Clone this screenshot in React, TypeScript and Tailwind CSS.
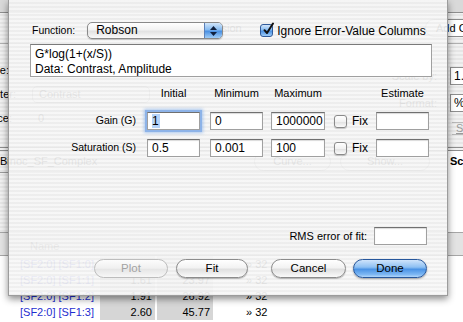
import React from "react";

type Row = { name: string; a: string; b: string };

const rows: Row[] = [
  { name: "[SF2:0] [SF1:0]", a: "1.22", b: "18.05" },
  { name: "[SF2:0] [SF1:1]", a: "1.61", b: "23.97" },
  { name: "[SF2:0] [SF1:2]", a: "1.91", b: "26.92" },
  { name: "[SF2:0] [SF1:3]", a: "2.60", b: "45.77" },
];

const TextBox = ({
  value = "",
  className = "",
  focused = false,
}: {
  value?: string;
  className?: string;
  focused?: boolean;
}) => (
  <div
    className={`h-[18px] shrink-0 flex items-center pl-[4px] bg-white border border-[#a0a0a0] border-t-[#707070] text-[12px] text-black whitespace-nowrap overflow-hidden ${
      focused
        ? "shadow-[0_0_0_2px_#8db3e8,0_0_3px_3px_rgba(110,160,230,0.55)]"
        : "shadow-[inset_0_1px_1px_rgba(0,0,0,0.15)]"
    } ${className}`}
  >
    {focused ? (
      <span className="bg-[#b5d3f8] leading-[14px] pr-[1px]">{value}</span>
    ) : (
      value
    )}
  </div>
);

const Check = ({ on = false, className = "" }: { on?: boolean; className?: string }) =>
  on ? (
    <span
      className={`relative block shrink-0 w-[13px] h-[13px] rounded-[3px] border border-[#2f5a9a] bg-[linear-gradient(180deg,#d3e6fb_0%,#86bbf1_45%,#4a90e2_55%,#9fcdf8_100%)] ${className}`}
    >
      <svg
        className="absolute left-[1px] top-[-3px]"
        width="13"
        height="14"
        viewBox="0 0 13 14"
      >
        <path
          d="M2.5 8.2 L5 11 L11 1.5"
          fill="none"
          stroke="#111"
          strokeWidth="2"
          strokeLinecap="round"
          strokeLinejoin="round"
        />
      </svg>
    </span>
  ) : (
    <span
      className={`block shrink-0 w-[13px] h-[13px] rounded-[3px] border border-[#8a8a8a] bg-[linear-gradient(180deg,#ffffff_0%,#f2f2f2_50%,#e2e2e2_55%,#fbfbfb_100%)] shadow-[0_1px_1px_rgba(0,0,0,0.2)] ${className}`}
    />
  );

const AquaButton = ({
  label,
  className = "",
  kind = "normal",
}: {
  label: string;
  className?: string;
  kind?: "normal" | "default" | "disabled";
}) => {
  const look =
    kind === "default"
      ? "border-[#27579c] bg-[linear-gradient(180deg,#cfe4fb_0%,#8ec0f3_42%,#4b93e5_55%,#7db7f3_85%,#b2d7fb_100%)] text-black shadow-[0_1px_2px_rgba(0,0,0,0.35)]"
      : kind === "disabled"
      ? "border-[#bdbdbd] bg-[linear-gradient(180deg,#fcfcfc_0%,#f0f0f0_48%,#e6e6e6_55%,#f7f7f7_100%)] text-[#a3a3a3]"
      : "border-[#8c8c8c] bg-[linear-gradient(180deg,#ffffff_0%,#f3f3f3_45%,#e0e0e0_55%,#fafafa_100%)] text-black shadow-[0_1px_1px_rgba(0,0,0,0.25)]";
  return (
    <div
      className={`h-[19px] shrink-0 rounded-full border flex items-center justify-center text-[11.5px] ${look} ${className}`}
    >
      {label}
    </div>
  );
};

const App = () => {
  return (
    <div className="relative w-[463px] h-[322px] overflow-hidden font-['Liberation_Sans',Arial,sans-serif] text-black bg-[repeating-linear-gradient(180deg,#f1f1f1_0px,#f1f1f1_2px,#e6e6e6_2px,#e6e6e6_4px)]">
      {/* window behind the sheet */}
      <div className="flex flex-col h-full">
        <div className="h-[13px] shrink-0 bg-[#d9d9d9] border-b border-[#8e8e8e]" />
        <div className="h-[31px] shrink-0 flex items-center border-b border-[#b0b0b0] text-[11px]">
          <span className="shrink-0 ml-[186px] w-[60px]">Regression</span>
          <span className="shrink-0 ml-[179px] h-[18px] px-[10px] rounded-full border border-[#8c8c8c] bg-white flex items-center whitespace-nowrap">
            Add Column
          </span>
        </div>

        <div className="h-[103px] shrink-0 flex">
          <div className="flex-1 flex flex-col pt-[14px] text-[11px]">
            <div className="h-[24px] flex items-center">
              <span className="w-[9px] flex justify-end whitespace-nowrap">Type:</span>
            </div>
            <div className="h-[24px] flex items-center">
              <span className="w-[16px] flex justify-end whitespace-nowrap">Parameter:</span>
              <span className="ml-[16px] w-[118px] h-[17px] rounded-[5px] border border-[#8c8c8c] flex items-center pl-[6px]">
                Contrast
              </span>
            </div>
            <div className="h-[24px] flex items-center">
              <span className="w-[12px] flex justify-end whitespace-nowrap">Distance:</span>
              <span className="ml-[26px]">0</span>
            </div>
          </div>
          <div className="w-[93px] shrink-0 flex flex-col pt-[23px] text-[11px]">
            <div className="h-[18px] flex items-center">
              <span className="shrink-0 w-[67px] text-right">Scale by:</span>
              <span className="ml-[13px] w-[40px] h-[18px] shrink-0 bg-white border border-[#8e8e8e] flex items-center pl-[3px] text-[12px]">
                1.0
              </span>
            </div>
            <div className="mt-[9px] h-[18px] flex items-center">
              <span className="shrink-0 w-[67px] text-right">Format:</span>
              <span className="ml-[13px] w-[40px] h-[18px] shrink-0 bg-white border border-[#8e8e8e] flex items-center pl-[3px] text-[12px]">
                %7.2f
              </span>
            </div>
            <div className="mt-[10px] h-[13px] flex items-center">
              <span className="shrink-0 ml-[82px] h-[13px] px-[4px] border-y border-[#b8b8b8] text-[#9a9a9a] underline leading-[11px] whitespace-nowrap">
                Set...
              </span>
            </div>
          </div>
        </div>

        <div className="h-[4px] shrink-0 border-y border-[#8e8e8e]" />
        <div className="h-[22px] shrink-0 flex items-center border-b border-[#9a9a9a] text-[11px]">
          <span className="shrink-0 w-[254px] whitespace-nowrap">Binoc_SF_Complex</span>
          <span className="shrink-0 w-[77px] h-[19px] rounded-full border border-[#8c8c8c] flex items-center justify-center">
            Curve...
          </span>
          <span className="shrink-0 ml-[9px] w-[90px] h-[19px] rounded-full border border-[#8c8c8c] flex items-center justify-center">
            Show...
          </span>
          <span className="shrink-0 ml-[17px] h-[22px] px-[2px] border-x border-[#8e8e8e] bg-white flex items-center font-bold whitespace-nowrap">
            Score...
          </span>
        </div>

        <div className="h-[59px] shrink-0 flex">
          <div className="flex-1" />
          <div className="w-[15px] bg-white" />
        </div>

        <div className="h-[24px] shrink-0 flex items-center border-y border-[#a6a6a6] bg-[#e3e3e3] text-[11px] text-[#333]">
          <span className="ml-[30px] mt-[4px]">Name</span>
        </div>

        <div className="flex-1 bg-white text-[11px]">
          {rows.map((r) => (
            <div key={r.name} className="h-[16px] flex items-center">
              <span className="shrink-0 w-[100px] pl-[20px] text-[#1f2fd0] whitespace-nowrap">{r.name}</span>
              <span className="shrink-0 w-[55px] h-[16px] bg-[#d6d6d6] flex items-center justify-end pr-[3px]">
                {r.a}
              </span>
              <span className="shrink-0 ml-[2px] w-[56px] h-[16px] bg-[#d6d6d6] flex items-center justify-end pr-[3px]">
                {r.b}
              </span>
              <span className="shrink-0 ml-[33px]">» 32</span>
            </div>
          ))}
        </div>
      </div>

      {/* the sheet */}
      <div className="absolute left-[8px] top-0 w-[440px] h-[296px] flex flex-col border-x border-b border-[#9c9c9c] shadow-[0_3px_7px_rgba(0,0,0,0.45)] bg-[repeating-linear-gradient(180deg,rgba(247,247,247,0.93)_0px,rgba(247,247,247,0.93)_2px,rgba(238,238,238,0.93)_2px,rgba(238,238,238,0.93)_4px)]">
        <div className="mt-[22px] h-[17px] flex items-center">
          <span className="ml-[23px] text-[10.5px]">Function:</span>
          <div className="ml-[12px] w-[136px] h-[17px] shrink-0 flex rounded-[5px] border border-[#8a8a8a] overflow-hidden bg-[linear-gradient(180deg,#ffffff_0%,#f3f3f3_45%,#e2e2e2_55%,#fafafa_100%)] shadow-[0_1px_1px_rgba(0,0,0,0.2)]">
            <span className="flex-1 pl-[8px] text-[12px] leading-[15px]">Robson</span>
            <span className="w-[18px] border-l border-[#5b80b8] flex flex-col items-center justify-center gap-[2px] bg-[linear-gradient(180deg,#d2e6fb_0%,#86bbf1_45%,#4a90e2_55%,#9fcdf8_100%)]">
              <svg width="7" height="4" viewBox="0 0 7 4">
                <path d="M0 4 L3.5 0 L7 4 Z" fill="#10213f" />
              </svg>
              <svg width="7" height="4" viewBox="0 0 7 4">
                <path d="M0 0 L7 0 L3.5 4 Z" fill="#10213f" />
              </svg>
            </span>
          </div>
          <Check on className="ml-[37px]" />
          <span className="ml-[4px] text-[12px] whitespace-nowrap">Ignore Error-Value Columns</span>
        </div>

        <div className="mt-[5px] ml-[21px] w-[402px] h-[33px] pl-[4px] pt-[2px] bg-white border border-[#a0a0a0] border-t-[#7a7a7a] text-[12px] leading-[15px]">
          <div>G*log(1+(x/S))</div>
          <div>Data: Contrast, Amplitude</div>
        </div>

        <div className="mt-[9px] h-[14px] flex items-center text-[11px]">
          <span className="shrink-0 w-[127px]" />
          <span className="shrink-0 ml-[11px] w-[53px] text-center">Initial</span>
          <span className="shrink-0 ml-[10px] w-[53px] text-center">Minimum</span>
          <span className="shrink-0 ml-[8px] w-[54px] text-center">Maximum</span>
          <span className="shrink-0 ml-[51px] w-[53px] text-center">Estimate</span>
        </div>

        <div className="mt-[12px] h-[18px] flex items-center">
          <span className="shrink-0 w-[127px] text-right text-[10.5px]">Gain (G)</span>
          <TextBox className="ml-[11px] w-[53px]" value="1" focused />
          <TextBox className="ml-[10px] w-[53px]" value="0" />
          <TextBox className="ml-[8px] w-[54px]" value="1000000" />
          <Check className="ml-[9px]" />
          <span className="shrink-0 ml-[5px] w-[24px] text-[12px]">Fix</span>
          <TextBox className="w-[53px]" />
        </div>

        <div className="mt-[9px] h-[18px] flex items-center">
          <span className="shrink-0 w-[127px] text-right text-[10.5px]">Saturation (S)</span>
          <TextBox className="ml-[11px] w-[53px]" value="0.5" />
          <TextBox className="ml-[10px] w-[53px]" value="0.001" />
          <TextBox className="ml-[8px] w-[54px]" value="100" />
          <Check className="ml-[9px]" />
          <span className="shrink-0 ml-[5px] w-[24px] text-[12px]">Fix</span>
          <TextBox className="w-[53px]" />
        </div>

        <div className="mt-[70px] h-[18px] flex items-center pr-[20px]">
          <span className="flex-1 text-right text-[11px]">RMS error of fit:</span>
          <TextBox className="ml-[7px] w-[53px]" />
        </div>

        <div className="mt-[14px] flex items-center">
          <AquaButton label="Plot" kind="disabled" className="ml-[85px] w-[74px]" />
          <AquaButton label="Fit" className="ml-[8px] w-[72px]" />
          <AquaButton label="Cancel" className="ml-[23px] w-[75px]" />
          <AquaButton label="Done" kind="default" className="ml-[7px] w-[74px]" />
        </div>
      </div>
    </div>
  );
};

export default App;
